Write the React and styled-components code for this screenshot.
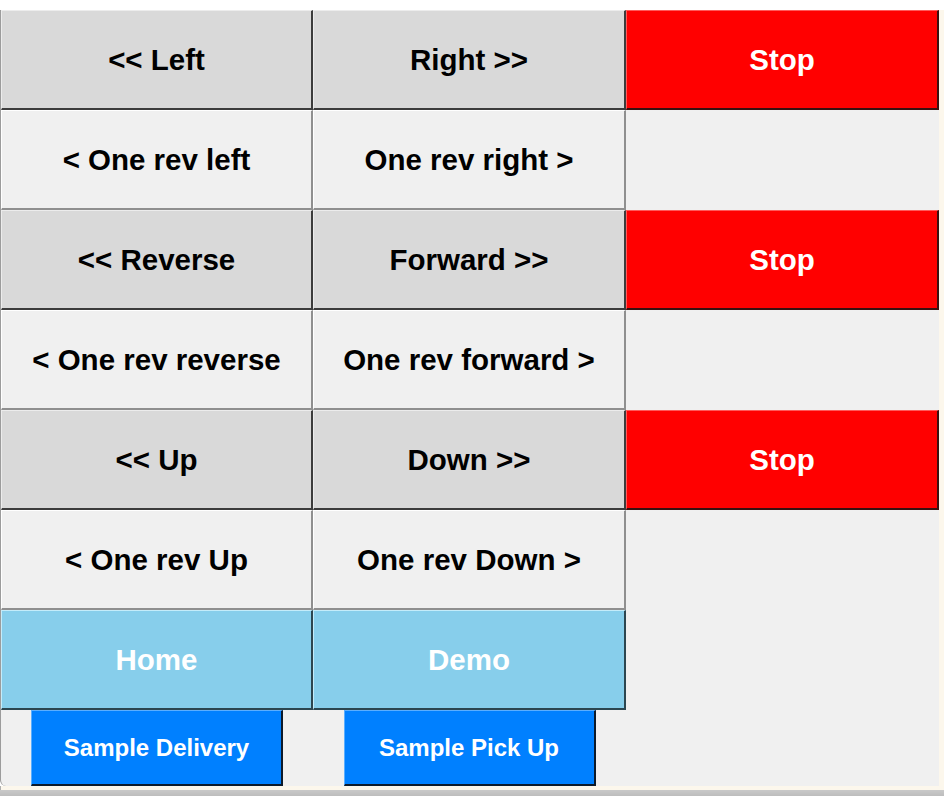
import styled, { createGlobalStyle } from "styled-components";

const VARIANTS = {
  gray: { bg: "#d9d9d9", fg: "#000", light: "#ececec", dark: "#3c3c3c" },
  light: { bg: "#f0f0f0", fg: "#000", light: "#ffffff", dark: "#8f8f8f" },
  red: { bg: "#ff0000", fg: "#fff", light: "#ff5a5a", dark: "#3a1010" },
  sky: { bg: "#87ceeb", fg: "#fff", light: "#c4ecfa", dark: "#2c4650" },
  blue: { bg: "#0080ff", fg: "#fff", light: "#5aaeff", dark: "#0d1a2a" },
};

const ROWS = [
  [
    { label: "<< Left", variant: "gray" },
    { label: "Right >>", variant: "gray" },
    { label: "Stop", variant: "red" },
  ],
  [
    { label: "< One rev left", variant: "light" },
    { label: "One rev right >", variant: "light" },
    null,
  ],
  [
    { label: "<< Reverse", variant: "gray" },
    { label: "Forward >>", variant: "gray" },
    { label: "Stop", variant: "red" },
  ],
  [
    { label: "< One rev reverse", variant: "light" },
    { label: "One rev forward >", variant: "light" },
    null,
  ],
  [
    { label: "<< Up", variant: "gray" },
    { label: "Down >>", variant: "gray" },
    { label: "Stop", variant: "red" },
  ],
  [
    { label: "< One rev Up", variant: "light" },
    { label: "One rev Down >", variant: "light" },
    null,
  ],
  [
    { label: "Home", variant: "sky" },
    { label: "Demo", variant: "sky" },
    null,
  ],
];

const App = () => {
  return (
    <>
      <GlobalStyle />
      <Screen>
        <TopStrip />
        <Middle>
          <Panel>
            {ROWS.flat().map((cell, i) =>
              cell ? (
                <ControlButton key={i} $variant={cell.variant}>
                  {cell.label}
                </ControlButton>
              ) : (
                <EmptyCell key={i} />
              )
            )}
            <SampleButton $variant="blue">Sample Delivery</SampleButton>
            <SampleButton $variant="blue">Sample Pick Up</SampleButton>
          </Panel>
          <RightEdge />
        </Middle>
        <BottomEdge />
        <BottomShadow />
      </Screen>
    </>
  );
};

const GlobalStyle = createGlobalStyle`
  html, body {
    margin: 0;
    padding: 0;
    background: #ffffff;
    font-family: "Liberation Sans", Arial, sans-serif;
  }
`;

const Screen = styled.div`
  display: flex;
  flex-direction: column;
  width: 944px;
  height: 796px;
  overflow: hidden;
`;

const TopStrip = styled.div`
  height: 10px;
  background: #ffffff;
`;

const Middle = styled.div`
  display: flex;
  height: 776px;
`;

const Panel = styled.div`
  display: grid;
  grid-template-columns: 312px 313px 313px;
  grid-template-rows: repeat(7, 100px) 76px;
  width: 938px;
  background: #f0f0f0;
  border-left: 1px solid #9c9c9c;
  border-bottom-left-radius: 6px;
`;

const RightEdge = styled.div`
  flex: 1;
  background: #fcf7ec;
`;

const BottomEdge = styled.div`
  height: 4px;
  background: #fcf7ec;
  border-left: 1px solid #b0b0b0;
`;

const BottomShadow = styled.div`
  height: 6px;
  background: linear-gradient(#c9c9c9, #bdbdbd);
`;

const ControlButton = styled.button`
  display: flex;
  align-items: center;
  justify-content: center;
  margin: 0;
  padding: 1px 0 0;
  box-sizing: border-box;
  width: 100%;
  height: 100%;
  font-family: "Liberation Sans", Arial, sans-serif;
  font-size: 29.5px;
  font-weight: bold;
  color: ${p => VARIANTS[p.$variant].fg};
  background: ${p => VARIANTS[p.$variant].bg};
  border-style: solid;
  border-width: 1px 2px 2px 1px;
  border-color: ${p => {
    const v = VARIANTS[p.$variant];
    return `${v.light} ${v.dark} ${v.dark} ${v.light}`;
  }};
  border-radius: 0;
  cursor: pointer;
`;

const EmptyCell = styled.div`
  background: #f0f0f0;
`;

const SampleButton = styled(ControlButton)`
  justify-self: center;
  width: 252px;
  height: 76px;
  font-size: 24px;
`;

export default App;
